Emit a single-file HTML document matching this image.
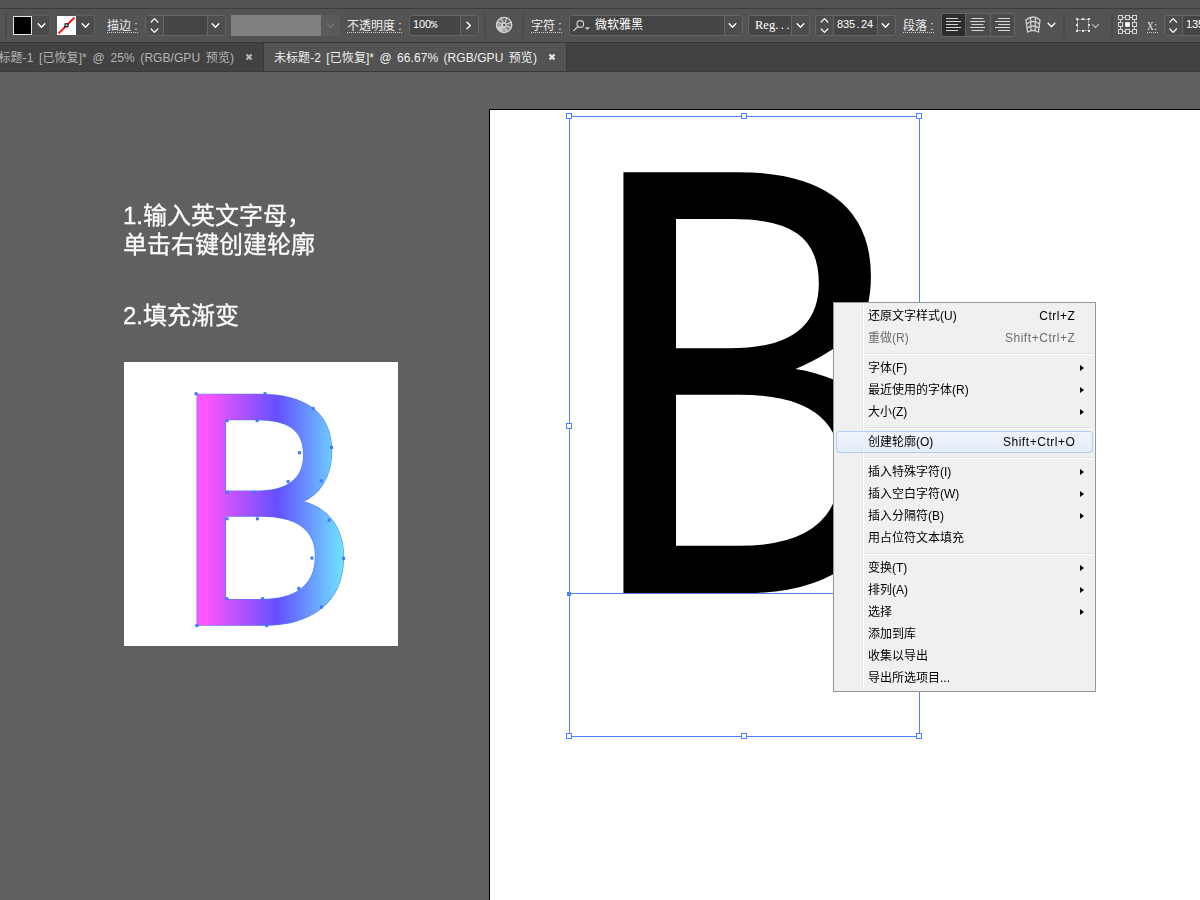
<!DOCTYPE html>
<html lang="zh-CN">
<head>
<meta charset="utf-8">
<title>Illustrator</title>
<style>
*{box-sizing:border-box;margin:0;padding:0}
html,body{width:1200px;height:900px;overflow:hidden;background:#606060}
body{position:relative;font-family:"Liberation Sans","Noto Sans CJK SC",sans-serif;color:#fff}
.abs{position:absolute}
/* top chrome */
#strip{left:0;top:0;width:1200px;height:8px;background:#535353}
#line1{left:0;top:8px;width:1200px;height:1px;background:#3c3c3c}
#toolbar{left:0;top:9px;width:1200px;height:33px;background:#535353}
#line2{left:0;top:42px;width:1200px;height:1px;background:#383838}
#tabbar{left:0;top:43px;width:1200px;height:28px;background:#424242}
#line3{left:0;top:71px;width:1200px;height:1px;background:#3a3a3a}
.tab{top:43px;height:28px;font-size:12px;line-height:30px;white-space:nowrap;word-spacing:2px;letter-spacing:.06px}
.lbl{font-size:12px;line-height:15px;color:#ececec;white-space:nowrap;border-bottom:1px dotted #d0d0d0;height:14px;margin-top:1px}
.fld{top:15px;height:21px;border:1px solid #656565;border-radius:3px;background:#454545}
.fld i{position:absolute;top:0;bottom:0;width:1px;background:#656565}
.btnbg{position:absolute;top:0;bottom:0;background:#4d4d4d}
.vsep{top:13px;width:2px;height:25px;background:#4a4a4a}
svg{position:absolute;overflow:visible}
.ft{font-size:12px;line-height:19px;color:#fff;white-space:nowrap;position:absolute;top:0}
.hd{width:6px;height:6px;background:#fff;border:1px solid #4f80ff}

#menu{left:833px;top:302px;width:263px;height:390px;background:#f0f0f0;border:1px solid #979797;color:#000;font-size:12px}
#menu .gut{position:absolute;left:28px;top:2px;bottom:2px;width:2px;border-left:1px solid #e2e3e3;border-right:1px solid #fff}
#menu .it{position:absolute;left:3px;right:3px;height:22px;line-height:21px;white-space:nowrap}
#menu .it span.l{position:absolute;left:31px;top:0}
#menu .it span.r{position:absolute;right:16.5px;top:0;letter-spacing:.55px}
#menu .it b{position:absolute;right:8px;top:6.5px;width:0;height:0;border-left:4px solid #000;border-top:3.7px solid transparent;border-bottom:3.7px solid transparent}
#menu .dis{color:#6d6d6d}
#menu .sep{position:absolute;left:31px;right:2px;height:2px;border-top:1px solid #e0e0e0;border-bottom:1px solid #fff}
#menu .hl{position:absolute;left:2px;right:2px;top:128px;height:22px;border:1px solid #aecff7;border-radius:3px;background:linear-gradient(rgba(240,246,253,.75),rgba(222,234,251,.75))}
.num{font-family:'Liberation Sans',sans-serif;font-size:11px;letter-spacing:-.1px;margin-top:-1px}
.num b{font-weight:400;padding:0 1.5px}
.num em{font-style:normal;font-family:'Liberation Mono',monospace;font-size:11px;letter-spacing:0;margin-left:-.3px}
</style>
</head>
<body>
<div id="strip" class="abs"></div>
<div id="line1" class="abs"></div>
<div id="toolbar" class="abs"></div>
<div id="line2" class="abs"></div>
<div id="tabbar" class="abs"></div>
<div id="line3" class="abs"></div>
<div class="abs" style="left:5px;top:13px;width:2px;height:25px;background:#494949"></div>
<div class="abs" style="left:31px;top:15px;width:20px;height:21px;border:1px solid #606060;border-left:0;border-radius:0 3px 3px 0;background:#4b4b4b"></div>
<div class="abs" style="left:13px;top:16px;width:19px;height:19px;background:#000;border:1px solid #e8e8e8"></div>
<svg style="left:0;top:0" width="1" height="1"><path d="M38.20 23.80 L41.5 27.20 L44.80 23.80" fill="none" stroke="#fff" stroke-width="1.4" stroke-linecap="round" stroke-linejoin="round"/></svg>
<div class="abs" style="left:75px;top:15px;width:20px;height:21px;border:1px solid #606060;border-left:0;border-radius:0 3px 3px 0;background:#4b4b4b"></div>
<div class="abs" style="left:57px;top:16px;width:19px;height:19px;background:#fff"></div>
<svg style="left:0;top:0" width="1" height="1"><path d="M58.5 33.5 L74.5 17.5" stroke="#ff1515" stroke-width="1.8" fill="none"/><rect x="65" y="23.8" width="3" height="3" fill="#ddd" stroke="#000" stroke-width="1"/></svg>
<svg style="left:0;top:0" width="1" height="1"><path d="M82.20 23.80 L85.5 27.20 L88.80 23.80" fill="none" stroke="#fff" stroke-width="1.4" stroke-linecap="round" stroke-linejoin="round"/></svg>
<div class="abs lbl" style="left:107px;top:18px">描边 :</div>
<div class="abs fld" style="left:145px;width:81px"><div class="btnbg" style="left:0;width:17px;border-radius:2px 0 0 2px"></div><div class="btnbg" style="left:62px;right:0;border-radius:0 2px 2px 0"></div><i style="left:17px"></i><i style="left:61px"></i></div>
<svg style="left:0;top:0" width="1" height="1"><path d="M151.2 22 L154.5 18.7 L157.8 22 M151.2 29 L154.5 32.3 L157.8 29" fill="none" stroke="#fff" stroke-width="1.2" stroke-linecap="round" stroke-linejoin="round"/></svg><svg style="left:0;top:0" width="1" height="1"><path d="M212.20 23.80 L215.5 27.20 L218.80 23.80" fill="none" stroke="#fff" stroke-width="1.4" stroke-linecap="round" stroke-linejoin="round"/></svg>
<div class="abs" style="left:231px;top:15px;width:90px;height:21px;background:#808080"></div>
<div class="abs" style="left:321px;top:15px;width:19px;height:21px;background:#5a5a5a;border-radius:0 3px 3px 0"></div>
<svg style="left:0;top:0" width="1" height="1"><path d="M327.20 23.80 L330.5 27.20 L333.80 23.80" fill="none" stroke="#767676" stroke-width="1.4" stroke-linecap="round" stroke-linejoin="round"/></svg>
<div class="abs lbl" style="left:347px;top:18px">不透明度 :</div>
<div class="abs fld" style="left:409px;width:70px"><div class="btnbg" style="left:51px;right:0;border-radius:0 2px 2px 0"></div><i style="left:50px"></i><span class="ft num" style="left:3px">100<em>%</em></span></div>
<svg style="left:0;top:0" width="1" height="1"><path d="M467 22.2 L470.3 25.5 L467 28.8" fill="none" stroke="#fff" stroke-width="1.4" stroke-linecap="round" stroke-linejoin="round"/></svg>
<div class="abs vsep" style="left:484px"></div><div class="abs vsep" style="left:522px"></div>
<svg style="left:0;top:0" width="1" height="1"><path d="M504.1 25 L501.19 17.98 A7.6 7.6 0 0 1 507.01 17.98 Z" fill="#6e6e6e"/><path d="M504.1 25 L507.01 17.98 A7.6 7.6 0 0 1 511.12 22.09 Z" fill="#5f5f5f"/><path d="M504.1 25 L511.12 22.09 A7.6 7.6 0 0 1 511.12 27.91 Z" fill="#7a7a7a"/><path d="M504.1 25 L511.12 27.91 A7.6 7.6 0 0 1 507.01 32.02 Z" fill="#8c8c8c"/><path d="M504.1 25 L507.01 32.02 A7.6 7.6 0 0 1 501.19 32.02 Z" fill="#a2a2a2"/><path d="M504.1 25 L501.19 32.02 A7.6 7.6 0 0 1 497.08 27.91 Z" fill="#c8c8c8"/><path d="M504.1 25 L497.08 27.91 A7.6 7.6 0 0 1 497.08 22.09 Z" fill="#9c9c9c"/><path d="M504.1 25 L497.08 22.09 A7.6 7.6 0 0 1 501.19 17.98 Z" fill="#828282"/><path d="M504.1 25 L501.19 17.98" stroke="#d4d4d4" stroke-width="1.1"/><path d="M504.1 25 L507.01 17.98" stroke="#d4d4d4" stroke-width="1.1"/><path d="M504.1 25 L511.12 22.09" stroke="#d4d4d4" stroke-width="1.1"/><path d="M504.1 25 L511.12 27.91" stroke="#d4d4d4" stroke-width="1.1"/><path d="M504.1 25 L507.01 32.02" stroke="#d4d4d4" stroke-width="1.1"/><path d="M504.1 25 L501.19 32.02" stroke="#d4d4d4" stroke-width="1.1"/><path d="M504.1 25 L497.08 27.91" stroke="#d4d4d4" stroke-width="1.1"/><path d="M504.1 25 L497.08 22.09" stroke="#d4d4d4" stroke-width="1.1"/><circle cx="504.1" cy="25" r="7.6" fill="none" stroke="#d6d6d6" stroke-width="1.4"/><circle cx="504.1" cy="25" r="2.4" fill="#d0d0d0"/><circle cx="504.1" cy="25" r="1.1" fill="#3c3c3c"/></svg>
<div class="abs lbl" style="left:531px;top:18px">字符 :</div>
<div class="abs fld" style="left:569px;width:174px"><div class="btnbg" style="left:155px;right:0;border-radius:0 2px 2px 0"></div><i style="left:154px"></i><span class="ft" style="left:25px">微软雅黑</span></div>
<svg style="left:0;top:0" width="1" height="1"><circle cx="580.3" cy="24" r="3.3" fill="none" stroke="#cdcdcd" stroke-width="1.2"/><path d="M578 26.5 L573.7 30.6" stroke="#cdcdcd" stroke-width="1.3" stroke-linecap="round"/><path d="M584.8 27.2 L590 27.2 L587.4 30 Z" fill="#cdcdcd"/></svg>
<svg style="left:0;top:0" width="1" height="1"><path d="M729.20 23.80 L732.5 27.20 L735.80 23.80" fill="none" stroke="#fff" stroke-width="1.4" stroke-linecap="round" stroke-linejoin="round"/></svg>
<div class="abs fld" style="left:748px;width:62px"><div class="btnbg" style="left:43px;right:0;border-radius:0 2px 2px 0"></div><i style="left:42px"></i><span class="ft" style="left:6px;font-family:'Liberation Serif',serif;font-size:12.5px">Reg<span style="letter-spacing:2.5px">...</span></span></div>
<svg style="left:0;top:0" width="1" height="1"><path d="M797.20 23.80 L800.5 27.20 L803.80 23.80" fill="none" stroke="#fff" stroke-width="1.4" stroke-linecap="round" stroke-linejoin="round"/></svg>
<div class="abs fld" style="left:815px;width:81px"><div class="btnbg" style="left:0;width:17px;border-radius:2px 0 0 2px"></div><div class="btnbg" style="left:62px;right:0;border-radius:0 2px 2px 0"></div><i style="left:17px"></i><i style="left:61px"></i><span class="ft num" style="left:21px">835<b>.</b>24</span></div>
<svg style="left:0;top:0" width="1" height="1"><path d="M821.2 22 L824.5 18.7 L827.8 22 M821.2 29 L824.5 32.3 L827.8 29" fill="none" stroke="#fff" stroke-width="1.2" stroke-linecap="round" stroke-linejoin="round"/></svg><svg style="left:0;top:0" width="1" height="1"><path d="M882.20 23.80 L885.5 27.20 L888.80 23.80" fill="none" stroke="#fff" stroke-width="1.4" stroke-linecap="round" stroke-linejoin="round"/></svg>
<div class="abs lbl" style="left:903px;top:18px">段落 :</div>
<div class="abs" style="left:941px;top:13px;width:74px;height:24px;border:1px solid #656565;border-radius:3px;background:#4b4b4b"><div style="position:absolute;left:0;top:0;bottom:0;width:23px;background:#2d2d2d;border-radius:2px 0 0 2px"></div><i style="position:absolute;left:23px;top:0;bottom:0;width:1px;background:#656565"></i><i style="position:absolute;left:48px;top:0;bottom:0;width:1px;background:#656565"></i></div>
<svg style="left:0;top:0" width="1" height="1" stroke="#d6d6d6" stroke-width="1"><path d="M946 18.5 h12"/><path d="M971.5 18.5 h12"/><path d="M998 18.5 h12"/><path d="M946 21.5 h15"/><path d="M970.0 21.5 h15"/><path d="M995 21.5 h15"/><path d="M946 24.5 h12"/><path d="M971.5 24.5 h12"/><path d="M998 24.5 h12"/><path d="M946 27.5 h15"/><path d="M970.0 27.5 h15"/><path d="M995 27.5 h15"/><path d="M946 30.5 h12"/><path d="M971.5 30.5 h12"/><path d="M998 30.5 h12"/></svg>
<svg style="left:0;top:0" width="1" height="1" fill="none" stroke="#cfcfcf" stroke-width="1.3"><path d="M1026 20 Q1033 14 1040 20 L1038.5 32 Q1033 29 1027.5 32 Z"/><path d="M1026.5 24 Q1033 19 1039.5 24 M1027 28 Q1033 24 1039 28 M1030.5 17.5 L1031 30.5 M1035.5 17.5 L1035 30.5"/></svg>
<svg style="left:0;top:0" width="1" height="1"><path d="M1048.20 23.30 L1051.5 26.70 L1054.80 23.30" fill="none" stroke="#fff" stroke-width="1.4" stroke-linecap="round" stroke-linejoin="round"/></svg>
<div class="abs vsep" style="left:1063px"></div><div class="abs vsep" style="left:1111px"></div>
<svg style="left:0;top:0" width="1" height="1"><rect x="1077.5" y="19.5" width="11" height="11" fill="none" stroke="#c8c8c8" stroke-width="1" stroke-dasharray="2 1"/><rect x="1076" y="18" width="2" height="2" fill="#e0e0e0"/><rect x="1082" y="18" width="2" height="2" fill="#e0e0e0"/><rect x="1088" y="18" width="2" height="2" fill="#e0e0e0"/><rect x="1076" y="24" width="2" height="2" fill="#e0e0e0"/><rect x="1088" y="24" width="2" height="2" fill="#e0e0e0"/><rect x="1076" y="30" width="2" height="2" fill="#e0e0e0"/><rect x="1082" y="30" width="2" height="2" fill="#e0e0e0"/><rect x="1088" y="30" width="2" height="2" fill="#e0e0e0"/></svg>
<svg style="left:0;top:0" width="1" height="1"><path d="M1092.5 24.5 L1095.5 27.5 L1098.5 24.5" fill="none" stroke="#b0b0b0" stroke-width="1.2" stroke-linecap="round" stroke-linejoin="round"/></svg>
<svg style="left:0;top:0" width="1" height="1" fill="none" stroke="#d4d4d4" stroke-width="1"><rect x="1118.5" y="15.5" width="4" height="4"/><rect x="1118.5" y="22.5" width="4" height="4"/><rect x="1118.5" y="29.5" width="4" height="4"/><rect x="1125.5" y="15.5" width="4" height="4"/><rect x="1125.2" y="22.2" width="4.6" height="4.6" fill="#fff" stroke="none"/><rect x="1125.5" y="29.5" width="4" height="4"/><rect x="1132.5" y="15.5" width="4" height="4"/><rect x="1132.5" y="22.5" width="4" height="4"/><rect x="1132.5" y="29.5" width="4" height="4"/><path d="M1123 17.5 h2 M1130 17.5 h2 M1123 31.5 h2 M1130 31.5 h2 M1120.5 20 v2 M1120.5 27 v2 M1134.5 20 v2 M1134.5 27 v2"/></svg>
<div class="abs lbl" style="left:1147px;top:18px;width:11px;font-family:'Liberation Serif',serif;font-size:11.5px"><span style="display:inline-block;transform-origin:0 50%;transform:scaleX(.8);letter-spacing:.8px">X:</span></div>
<div class="abs fld" style="left:1164px;width:60px"><div class="btnbg" style="left:0;width:17px;border-radius:2px 0 0 2px"></div><i style="left:17px"></i><span class="ft num" style="left:21px">135</span></div>
<svg style="left:0;top:0" width="1" height="1"><path d="M1169.9 22 L1173.2 18.7 L1176.5 22 M1169.9 29 L1173.2 32.3 L1176.5 29" fill="none" stroke="#fff" stroke-width="1.2" stroke-linecap="round" stroke-linejoin="round"/></svg>
<!--TOOLBAR-->
<div class="abs tab" style="left:0;width:263px;color:#b4b4b4"><span style="position:absolute;left:-1.5px;word-spacing:2.3px">标题-1 [已恢复]* @ 25% (RGB/GPU 预览)</span></div>
<div class="abs" style="left:263px;top:43px;width:1px;height:28px;background:#383838"></div>
<div class="abs tab" style="left:264px;width:302px;background:#535353;color:#f0f0f0"><span style="position:absolute;left:10px">未标题-2 [已恢复]* @ 66.67% (RGB/GPU 预览)</span></div>
<div class="abs" style="left:566px;top:43px;width:1px;height:28px;background:#383838"></div>
<svg style="left:0;top:0" width="1" height="1" stroke-width="2" stroke-linecap="butt"><path d="M246.5 54.5 l5 5 m0 -5 l-5 5" stroke="#bcbcbc"/><path d="M549.5 54.5 l5 5 m0 -5 l-5 5" stroke="#f4f4f4"/></svg>
<!--TABS-->
<div class="abs" style="left:123px;top:201px;font-size:24px;line-height:29px;color:#fff;white-space:nowrap;opacity:.99;will-change:transform;-webkit-text-stroke:.3px #fff">1.输入英文字母，<br>单击右键创建轮廓</div>
<div class="abs" style="left:123px;top:301px;font-size:24px;line-height:29px;color:#fff;white-space:nowrap;opacity:.99;will-change:transform;-webkit-text-stroke:.3px #fff">2.填充渐变</div>
<div class="abs" style="left:124px;top:362px;width:274px;height:284px;background:#fff"></div>
<svg id="smallB" class="abs" style="left:0;top:0" width="1200" height="900"><defs><linearGradient id="g" gradientUnits="userSpaceOnUse" x1="29.7" y1="0" x2="191.7" y2="0"><stop offset="0.06" stop-color="#ff55fa"/><stop offset="0.55" stop-color="#6450ff"/><stop offset="1" stop-color="#6ee4ff"/></linearGradient></defs><g transform="translate(169.8 623.9) scale(0.905 1)" font-family="'Noto Sans CJK SC',sans-serif" font-size="311.4" stroke-linejoin="miter"><text x="0" y="0" stroke="#4f80ff" stroke-width="3.9" fill="#4f80ff">B</text><text x="0" y="0" stroke="url(#g)" stroke-width="2.7" fill="url(#g)">B</text></g></svg>
<svg class="abs" style="left:0;top:0" width="1" height="1" fill="#3c78ff"><rect x="194.6" y="392.2" width="3" height="3"/><rect x="263.5" y="392.2" width="3" height="3"/><rect x="311.7" y="407.1" width="3" height="3"/><rect x="330.0" y="446.0" width="3" height="3"/><rect x="319.7" y="479.4" width="3" height="3"/><rect x="298.0" y="451.2" width="3" height="3"/><rect x="286.6" y="480.1" width="3" height="3"/><rect x="255.6" y="419.1" width="3" height="3"/><rect x="225.6" y="419.1" width="3" height="3"/><rect x="225.6" y="490.8" width="3" height="3"/><rect x="252.5" y="490.8" width="3" height="3"/><rect x="225.6" y="517.3" width="3" height="3"/><rect x="255.9" y="517.3" width="3" height="3"/><rect x="327.6" y="518.7" width="3" height="3"/><rect x="342.1" y="556.9" width="3" height="3"/><rect x="310.4" y="556.6" width="3" height="3"/><rect x="297.3" y="586.9" width="3" height="3"/><rect x="320.0" y="605.5" width="3" height="3"/><rect x="261.1" y="597.2" width="3" height="3"/><rect x="225.6" y="597.2" width="3" height="3"/><rect x="195.3" y="624.1" width="3" height="3"/><rect x="265.2" y="624.1" width="3" height="3"/></svg>
<!--LEFT-->
<div id="artboard" class="abs" style="left:489px;top:109px;width:720px;height:800px;background:#fff;border:1px solid #000"></div>
<svg id="bigB" class="abs" style="left:0;top:0" width="1200" height="900"><text x="0" y="0" transform="translate(573.7 590.4) scale(0.912 1)" font-family="'Noto Sans CJK SC',sans-serif" font-size="566.85" stroke="#000" stroke-width="5.5" stroke-linejoin="miter" fill="#000">B</text></svg>
<svg class="abs" style="left:0;top:0" width="1" height="1"><path d="M834 348.6 Q813 362 795.5 369 Q813 371.4 834 379.8 Z" fill="#fff"/></svg>
<div id="selbox" class="abs" style="left:569px;top:116px;width:351px;height:621px;border:1px solid #4f80ff"></div>
<div id="baseline" class="abs" style="left:569px;top:593px;width:351px;height:1px;background:#4f80ff"></div>
<div class="abs" style="left:567px;top:592px;width:4px;height:4px;background:#4f80ff"></div>
<div class="abs hd" style="left:566px;top:113px"></div>
<div class="abs hd" style="left:741px;top:113px"></div>
<div class="abs hd" style="left:916px;top:113px"></div>
<div class="abs hd" style="left:566px;top:423px"></div>
<div class="abs hd" style="left:916px;top:423px"></div>
<div class="abs hd" style="left:566px;top:733px"></div>
<div class="abs hd" style="left:741px;top:733px"></div>
<div class="abs hd" style="left:916px;top:733px"></div>
<!--ARTBOARD-->
<div id="menu" class="abs">
<div class="gut"></div>
<div class="hl"></div>
<div class="it" style="top:3px"><span class="l">还原文字样式(U)</span><span class="r">Ctrl+Z</span></div>
<div class="it dis" style="top:25px"><span class="l">重做(R)</span><span class="r">Shift+Ctrl+Z</span></div>
<div class="sep" style="top:50px"></div>
<div class="it" style="top:55px"><span class="l">字体(F)</span><b></b></div>
<div class="it" style="top:77px"><span class="l">最近使用的字体(R)</span><b></b></div>
<div class="it" style="top:99px"><span class="l">大小(Z)</span><b></b></div>
<div class="sep" style="top:124px"></div>
<div class="it" style="top:129px"><span class="l">创建轮廓(O)</span><span class="r">Shift+Ctrl+O</span></div>
<div class="sep" style="top:154px"></div>
<div class="it" style="top:159px"><span class="l">插入特殊字符(I)</span><b></b></div>
<div class="it" style="top:181px"><span class="l">插入空白字符(W)</span><b></b></div>
<div class="it" style="top:203px"><span class="l">插入分隔符(B)</span><b></b></div>
<div class="it" style="top:225px"><span class="l">用占位符文本填充</span></div>
<div class="sep" style="top:250px"></div>
<div class="it" style="top:255px"><span class="l">变换(T)</span><b></b></div>
<div class="it" style="top:277px"><span class="l">排列(A)</span><b></b></div>
<div class="it" style="top:299px"><span class="l">选择</span><b></b></div>
<div class="it" style="top:321px"><span class="l">添加到库</span></div>
<div class="it" style="top:343px"><span class="l">收集以导出</span></div>
<div class="it" style="top:365px"><span class="l">导出所选项目...</span></div>
</div>
<!--MENU-->
</body>
</html>
